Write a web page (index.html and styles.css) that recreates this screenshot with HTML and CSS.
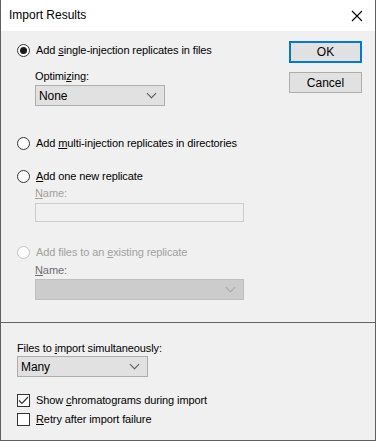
FILE: index.html
```html
<!DOCTYPE html>
<html lang="en">
<head>
  <meta charset="UTF-8" />
  <title>Import Results</title>
  <link rel="stylesheet" href="styles.css">
</head>
<body>
  <div class="window">
    <div class="titlebar">
      <span class="title">Import Results</span>
      <svg class="close" width="12" height="12" viewBox="0 0 12 12">
        <path d="M1 1 L11 11 M11 1 L1 11" stroke="#000" stroke-width="1.1" fill="none"/>
      </svg>
    </div>

    <div class="top">
      <div class="options">
        <label class="radio r1"><span class="dot checked"></span><span>Add <u>s</u>ingle-injection replicates in files</span></label>
        <div class="sub label-opt">Optimi<u>z</u>ing:</div>
        <div class="sub combo combo-opt"><span>None</span><span class="chev"></span></div>

        <label class="radio r2"><span class="dot"></span><span>Add <u>m</u>ulti-injection replicates in directories</span></label>

        <label class="radio r3"><span class="dot"></span><span><u>A</u>dd one new replicate</span></label>
        <div class="sub label-name disabled"><u>N</u>ame:</div>
        <div class="sub textbox"></div>

        <label class="radio r4 disabled"><span class="dot off"></span><span>Add files to an <u>e</u>xisting replicate</span></label>
        <div class="sub label-name2"><u>N</u>ame:</div>
        <div class="sub combo combo-off"><span></span><span class="chev light"></span></div>
      </div>

      <div class="buttons">
        <button class="btn default">OK</button>
        <button class="btn">Cancel</button>
      </div>
    </div>

    <div class="bottom">
      <div class="label-files">Files to <u>i</u>mport simultaneously:</div>
      <div class="combo combo-many"><span>Many</span><span class="chev"></span></div>
      <label class="check c1"><span class="box"><svg width="11" height="11" viewBox="0 0 11 11"><path d="M1 5.5 L4 8.5 L10 2" stroke="#333" stroke-width="1.2" fill="none"/></svg></span><span>Show <u>c</u>hromatograms during import</span></label>
      <label class="check c2"><span class="box"></span><span><u>R</u>etry after import failure</span></label>
    </div>
  </div>
</body>
</html>
```

FILE: styles.css
```css
* { box-sizing: border-box; margin: 0; padding: 0; }
body { background: #f0f0f0; font-family: "Liberation Sans", Arial, sans-serif; font-size: 11px; letter-spacing: -0.1px; color: #000; }

.window {
  width: 376px;
  height: 441px;
  background: #f0f0f0;
  border: 1px solid #5f5f5f;
  border-top: none;
}

.titlebar {
  height: 31px;
  background: #fff;
  display: flex;
  align-items: center;
  justify-content: space-between;
  padding: 0 12px 0 8px;
}
.title { font-size: 12px; margin-top: -1px; letter-spacing: 0; }
.close { display: block; }

.top {
  height: 292px;
  display: flex;
  justify-content: space-between;
  border-bottom: 1px solid #646464;
}
.options { padding: 11px 0 0 16px; display: flex; flex-direction: column; align-items: flex-start; }
.sub { margin-left: 18px; }

.radio, .check {
  display: flex;
  align-items: center;
  height: 16px;
  line-height: 16px;
}
.dot {
  flex: none;
  width: 13px;
  height: 13px;
  border: 1px solid #333;
  border-radius: 50%;
  background: #fff;
  margin-right: 6px;
  position: relative;
}
.dot.checked::after {
  content: "";
  position: absolute;
  left: 2px; top: 2px;
  width: 7px; height: 7px;
  border-radius: 50%;
  background: #1a1a1a;
}
.dot.off { border-color: #c3c3c3; }
.disabled { color: #a0a0a0; }

.label-opt { margin-top: 10px; height: 16px; line-height: 16px; }
.combo {
  display: flex;
  align-items: center;
  justify-content: space-between;
  height: 21px;
  border: 1px solid #adadad;
  background: #e1e1e1;
  padding: 0 9px 0 3px;
  font-size: 12px;
}
.combo-opt { width: 130px; margin-top: 1px; }
.chev {
  width: 7px;
  height: 7px;
  border-right: 1px solid #555;
  border-bottom: 1px solid #555;
  transform: rotate(45deg);
  margin-top: -4px;
}
.chev.light { border-color: #a8a8a8; }

.r2 { margin-top: 29px; }
.r3 { margin-top: 17px; }
.label-name { margin-top: 1px; height: 16px; line-height: 16px; }
.textbox {
  width: 209px;
  height: 19px;
  margin-top: 2px;
  border: 1px solid #cccccc;
  background: #f0f0f0;
}
.r4 { margin-top: 22px; }
.label-name2 { margin-top: 2px; height: 16px; line-height: 16px; color: #6d6d6d; }
.combo-off {
  width: 209px;
  height: 21px;
  margin-top: 1px;
  background: #cccccc;
  border-color: #bfbfbf;
}

.buttons {
  padding: 10px 13px 0 0;
  display: flex;
  flex-direction: column;
  gap: 9px;
}
.btn {
  width: 73px;
  height: 21px;
  font-family: inherit;
  font-size: 12px;
  background: #e1e1e1;
  border: 1px solid #adadad;
  color: #000;
}
.btn.default { border: 2px solid #0078d7; height: 22px; }

.bottom { padding: 17px 0 0 16px; }
.label-files { height: 16px; line-height: 16px; }
.combo-many { width: 131px; margin-top: 0; }

.box {
  flex: none;
  width: 13px;
  height: 13px;
  border: 1px solid #333;
  background: #fff;
  margin-right: 6px;
  display: flex;
  align-items: center;
  justify-content: center;
}
.box svg { display: block; }
.c1 { margin-top: 15px; }
.c2 { margin-top: 3px; }
```
